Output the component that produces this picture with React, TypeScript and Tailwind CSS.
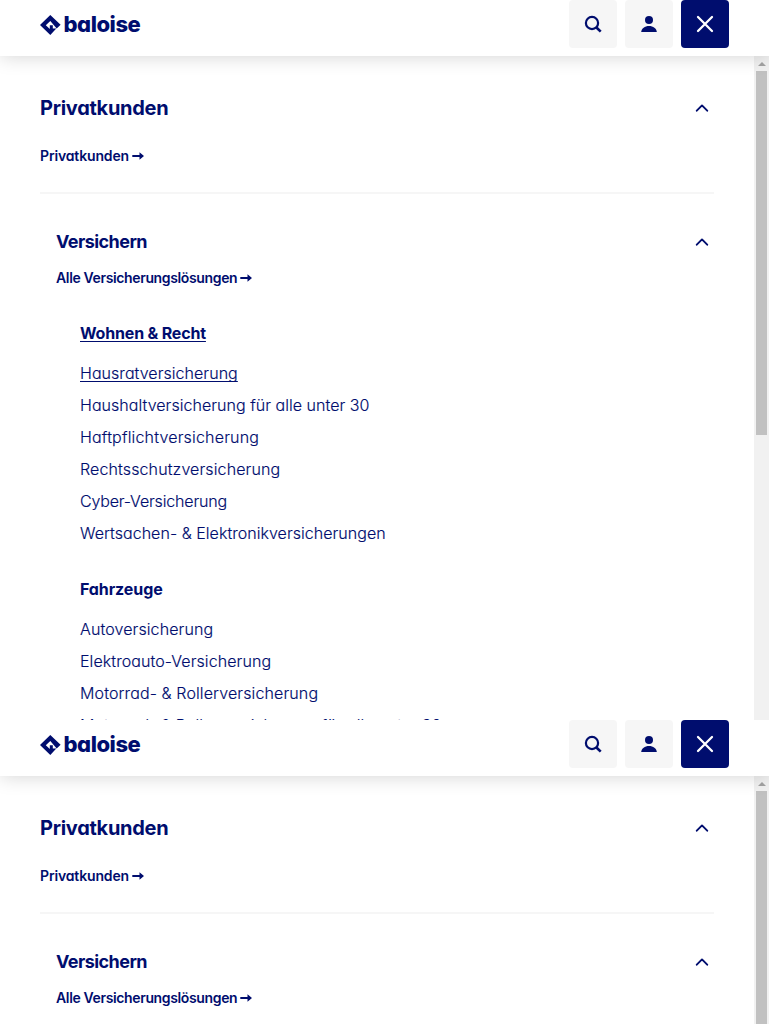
import React from "react";

type LinkItem = { label: string; spacing: string; active?: boolean };

const livingLinks: LinkItem[] = [
  { label: "Hausratversicherung", spacing: "tracking-[0.05px]", active: true },
  { label: "Haushaltversicherung für alle unter 30", spacing: "tracking-[0.04px]" },
  { label: "Haftpflichtversicherung", spacing: "tracking-[0.18px]" },
  { label: "Rechtsschutzversicherung", spacing: "tracking-[0.12px]" },
  { label: "Cyber-Versicherung", spacing: "tracking-[-0.16px]" },
  { label: "Wertsachen- & Elektronikversicherungen", spacing: "tracking-[0.04px]" },
];

const vehicleLinks: LinkItem[] = [
  { label: "Autoversicherung", spacing: "tracking-[0.11px]" },
  { label: "Elektroauto-Versicherung", spacing: "tracking-[0.08px]" },
  { label: "Motorrad- & Rollerversicherung", spacing: "tracking-[0.12px]" },
  { label: "Motorrad- & Rollerversicherung für alle unter 30", spacing: "tracking-[0.08px]" },
];

function Logo() {
  return (
    <div className="flex h-12 items-center">
      <svg width="21" height="20" viewBox="0 0 21 20" className="mt-[2px] shrink-0" fill="#000d6e">
        <path d="M10.300 0 20.600 9.800 16.700 13.500 10.300 6 5.800 10.200 9.800 14V10.200H12.800V13.600H16.300L10.300 20 0 10Z" />
      </svg>
      <span className="ml-[2.5px] text-[22px] leading-6 font-extrabold tracking-[-0.45px]">baloise</span>
    </div>
  );
}

function Header() {
  return (
    <header className="relative z-10 flex h-14 shrink-0 items-start justify-between bg-white px-10 shadow-[0_0_20px_rgba(0,0,0,0.18)]">
      <Logo />
      <div className="flex gap-2">
        <button className="flex size-12 items-center justify-center rounded bg-[#f6f6f6]" aria-label="Suche">
          <svg width="18" height="18" viewBox="0 0 18 18" fill="none" stroke="#000d6e" strokeWidth="2.2">
            <circle cx="8" cy="8" r="6.1" />
            <path d="m12.200 12.200 4.500 4.400" strokeWidth="2.7" />
          </svg>
        </button>
        <button className="flex size-12 items-center justify-center rounded bg-[#f6f6f6]" aria-label="Login">
          <svg width="16" height="16" viewBox="0 0 16 16" fill="#000d6e">
            <circle cx="8" cy="4" r="4" />
            <path d="M.200 16C.500 12.500 3.800 10 8 10s7.500 2.500 7.800 6Z" />
          </svg>
        </button>
        <button className="flex size-12 items-center justify-center rounded bg-[#000d6e]" aria-label="Schliessen">
          <svg width="18" height="18" viewBox="0 0 18 18" fill="none" stroke="white" strokeWidth="2.3" strokeLinecap="round">
            <path d="m2 2 14 14M16 2 2 16" />
          </svg>
        </button>
      </div>
    </header>
  );
}

function Chevron() {
  return (
    <svg width="14" height="8" viewBox="0 0 14 8" className="mr-[5px]" fill="none" stroke="#000d6e" strokeWidth="1.9" strokeLinecap="round" strokeLinejoin="round">
      <path d="M1.800 6.700 7 1.400l5.200 5.300" />
    </svg>
  );
}

function Arrow() {
  return (
    <svg width="12" height="8" viewBox="0 0 12 8" className="ml-[3px]" fill="#000d6e">
      <path d="M.300 3H7.500V.200L12 4 7.500 7.800V5H.300Z" />
    </svg>
  );
}

const underline = "underline decoration-1 underline-offset-[2px] [text-decoration-skip-ink:none]";

function LinkGroup({ title, titleSpacing, links, active }: { title: string; titleSpacing: string; links: LinkItem[]; active?: boolean }) {
  return (
    <section className="flex flex-col items-start">
      <h3 className={`mb-4 text-base leading-6 font-bold ${titleSpacing} ${active ? underline : ""}`}>{title}</h3>
      <ul className="flex flex-col gap-2">
        {links.map((link) => (
          <li key={link.label} className={`text-base leading-6 font-light whitespace-nowrap [-webkit-text-stroke:0.15px_#000d6e] ${link.spacing} ${link.active ? underline : ""}`}>
            {link.label}
          </li>
        ))}
      </ul>
    </section>
  );
}

function Scrollbar() {
  return (
    <div className="flex w-[15px] shrink-0 flex-col items-center bg-[#f1f1f1]">
      <div className="flex h-[15px] items-center">
        <svg width="8" height="4" viewBox="0 0 8 4" fill="#a3a3a3">
          <path d="M4 0 8 4H0Z" />
        </svg>
      </div>
      <div className="h-[364px] w-[11px] bg-[#c1c1c1]" />
    </div>
  );
}

function MenuScreen() {
  return (
    <div className="flex h-[720px] shrink-0 flex-col overflow-hidden bg-white">
      <Header />
      <div className="flex min-h-0 flex-1">
        <main className="min-w-0 flex-1 overflow-hidden pl-10">
          <div className="mr-10 border-b-2 border-[#f6f6f6]">
            <div className="mt-9 flex h-8 items-center justify-between">
              <h1 className="text-xl font-bold tracking-[-0.28px]">Privatkunden</h1>
              <Chevron />
            </div>
            <a className="mt-[22px] mb-[26px] flex h-5 items-center text-sm font-semibold tracking-[-0.15px]">
              Privatkunden
              <Arrow />
            </a>
          </div>
          <div className="mr-10 pl-4">
            <div className="mt-8 flex h-8 items-center justify-between">
              <h2 className="text-lg font-bold tracking-[-0.56px]">Versichern</h2>
              <Chevron />
            </div>
            <a className="mt-[10px] flex h-5 items-center text-sm font-semibold tracking-[-0.36px]">
              Alle Versicherungslösungen
              <Arrow />
            </a>
            <div className="mt-[33px] flex flex-col gap-8 pl-6">
              <LinkGroup title="Wohnen & Recht" titleSpacing="tracking-[-0.18px]" links={livingLinks} active />
              <LinkGroup title="Fahrzeuge" titleSpacing="tracking-[-0.1px]" links={vehicleLinks} />
            </div>
          </div>
        </main>
        <Scrollbar />
      </div>
    </div>
  );
}

export default function App() {
  return (
    <div className="flex h-screen w-full flex-col overflow-hidden bg-white font-['Inter',sans-serif] text-[#000d6e] [font-feature-settings:'cv11']">
      <MenuScreen />
      <MenuScreen />
    </div>
  );
}
